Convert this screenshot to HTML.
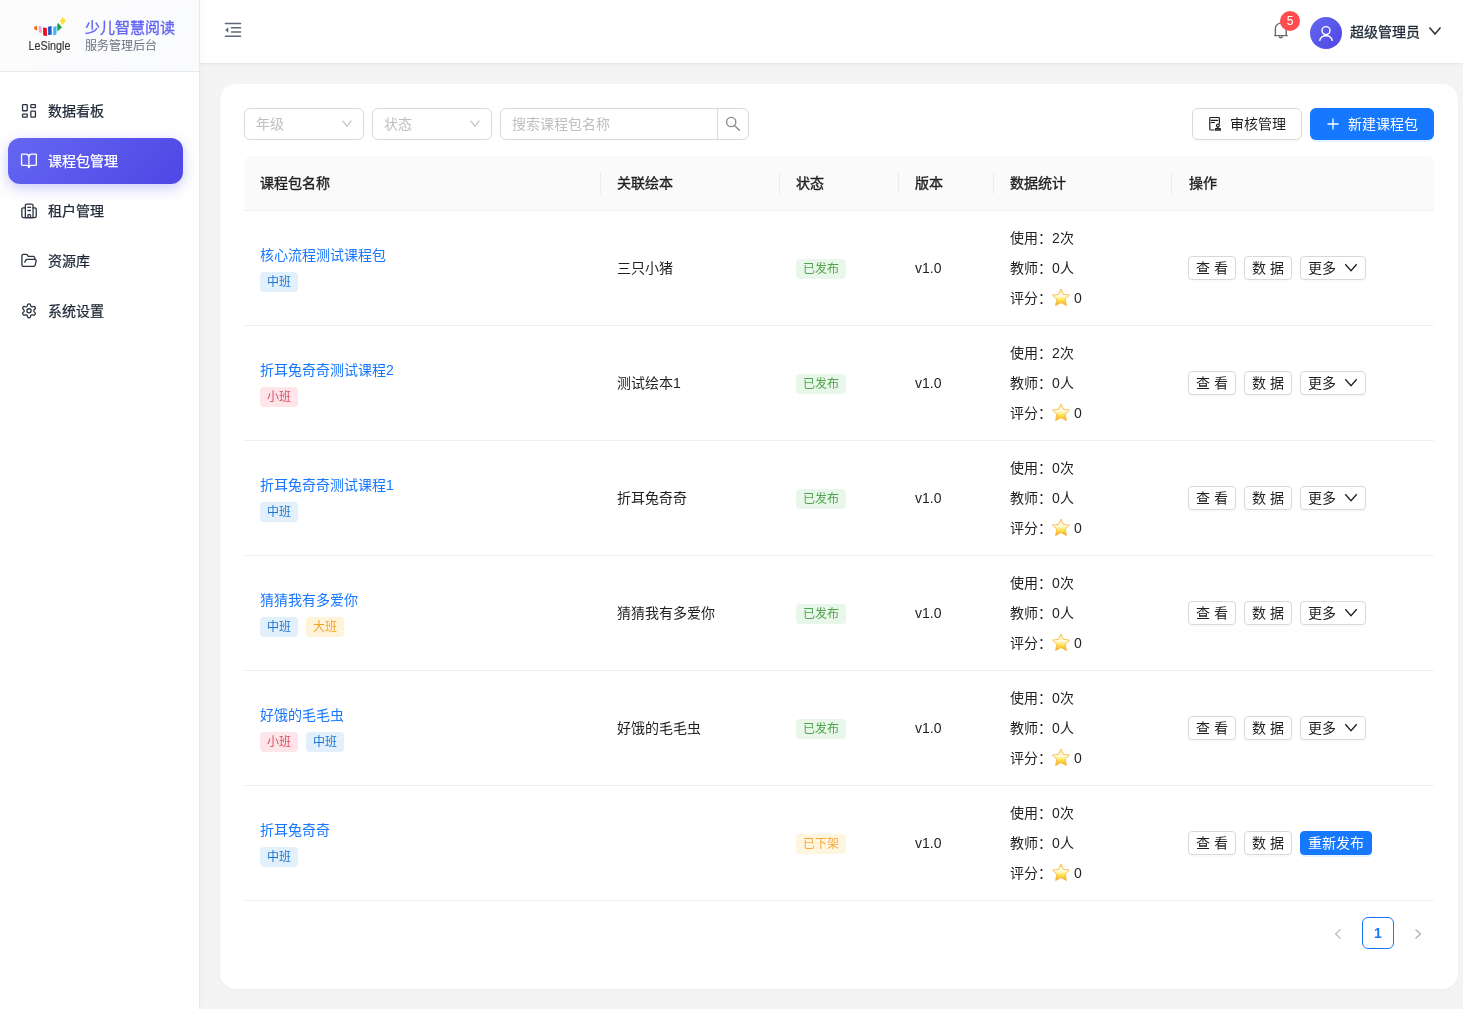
<!DOCTYPE html>
<html lang="zh-CN">
<head>
<meta charset="utf-8">
<style>
*{box-sizing:border-box;margin:0;padding:0}
html,body{width:1463px;height:1009px;overflow:hidden}
body{font-family:"Liberation Sans",sans-serif;background:#f4f4f4;color:#1f1f1f;font-size:14px;position:relative}
.abs{position:absolute}
/* sidebar */
#side{position:absolute;left:0;top:0;width:200px;height:1009px;background:#fff;border-right:1px solid #e8e9ee;box-shadow:2px 0 10px rgba(0,0,0,.025);z-index:2}
#logo{position:absolute;left:0;top:0;width:199px;height:72px;border-bottom:1px solid #e5e7eb;background:linear-gradient(135deg,#fcfcfd,#fafbfd)}
.ttl{position:absolute;left:85px;top:16px;font-size:15px;font-weight:400;-webkit-text-stroke:.35px currentColor;color:#6366f1;white-space:nowrap;letter-spacing:0}
.sub{position:absolute;left:85px;top:36px;font-size:12px;color:#6b7280;white-space:nowrap}
.mi{position:absolute;left:8px;width:175px;height:46px;border-radius:12px;color:#1f2937;font-size:14px;font-weight:400;-webkit-text-stroke:.25px currentColor}
.mi svg{position:absolute}
.mi span{position:absolute;left:40px;top:12px;line-height:22px}
.mi.act{background:linear-gradient(135deg,#6467f2,#4f46e5);color:#fff;box-shadow:0 4px 14px rgba(99,102,241,.35)}
/* header */
#hdr{position:absolute;left:200px;top:0;width:1263px;height:64px;background:#fff;border-bottom:1px solid #e8e9ee;box-shadow:0 1px 4px rgba(0,0,0,.04)}
/* card */
#card{position:absolute;left:220px;top:84px;width:1238px;height:905px;background:#fff;border-radius:16px;box-shadow:0 1px 3px rgba(0,0,0,.035)}
.sel{position:absolute;top:108px;height:32px;border:1px solid #d9d9d9;border-radius:6px;background:#fff;color:#bfbfbf;font-size:14px}
.sel span{position:absolute;left:11px;top:4px;line-height:22px}
.sel svg{position:absolute;right:11px;top:10px;overflow:visible}
.btn{position:absolute;height:32px;border-radius:6px;font-size:14px;line-height:30px;white-space:nowrap}
/* table */
#thead{position:absolute;left:244px;top:156px;width:1190px;height:55px;background:#fafafa;border-bottom:1px solid #f0f0f0;border-radius:8px 8px 0 0}
.th{position:absolute;top:16px;line-height:22px;font-weight:400;-webkit-text-stroke:.35px currentColor;color:#1f1f1f}
.dv{position:absolute;top:16px;width:1px;height:22px;background:#ececec}
.row{position:absolute;left:244px;width:1190px;height:115px;border-bottom:1px solid #f0f0f0}
.name{position:absolute;left:16px;line-height:22px;color:#1677ff}
.tag{position:absolute;height:20px;line-height:21px;padding:0 7px;border-radius:4px;font-size:12px}
.t-mid{background:#e2f0fc;color:#1f74d2}
.t-small{background:#fde5e9;color:#dc4c60}
.t-big{background:#fff4da;color:#f2a22a}
.book{position:absolute;left:373px;line-height:22px;color:#1f1f1f}
.st{position:absolute;left:552px;height:20px;line-height:20px;padding:0 7px;border-radius:4px;font-size:12px}
.pub{background:#e9f7ea;color:#52a350}
.off{background:#fff6e0;color:#f5a93a}
.ver{position:absolute;left:671px;line-height:22px}
.stat{position:absolute;left:766px;line-height:22px;white-space:nowrap}
.ab{position:absolute;height:24px;border:1px solid #d9d9d9;border-radius:4px;background:#fff;font-size:14px;line-height:22px;color:#1f1f1f;white-space:nowrap;box-shadow:0 2px 0 rgba(0,0,0,.02)}
.star{display:inline-block;vertical-align:-3px;margin:0 4px 0 0}
.ab.pri{background:#1677ff;border-color:#1677ff;color:#fff;box-shadow:0 2px 0 rgba(5,145,255,.1)}
.wc{will-change:transform}</style>
</head>
<body><div class="wc" style="position:absolute;left:0;top:0;width:1463px;height:1009px">
<svg width="0" height="0" style="position:absolute"><defs><linearGradient id="sg" x1="0" y1="0" x2="0" y2="1"><stop offset="0" stop-color="#ffe9a0"/><stop offset=".4" stop-color="#fffde6"/><stop offset=".68" stop-color="#fde24a"/><stop offset="1" stop-color="#f3a11a"/></linearGradient></defs></svg>
<div id="side">
  <div id="logo">
    <svg class="abs" style="left:26px;top:14px" width="48" height="42" viewBox="26 14 48 42">
      <path d="M34.5 26.5 L37 25.8 L37.2 30.8 L34 29 Z" fill="#f26d21"/>
      <path d="M38.8 25.8 L41.6 26.4 L41.8 33.2 L38.9 32.2 Z" fill="#f9a0cf"/>
      <path d="M43 27.6 L46.8 27.9 L47 36 L43.2 35.6 Z" fill="#e8101f"/>
      <path d="M48 26.8 L51.6 26.1 L51.7 34.8 L48.1 35.1 Z" fill="#1e5fc8"/>
      <path d="M53.2 26.9 L56.6 26.1 L56.4 34.6 L53.3 35.5 Z" fill="#3cb9f0"/>
      <path d="M57.2 24.6 L58.4 23.1 L61.9 27.4 L57.4 31.6 Z" fill="#17a34a"/>
      <path d="M59.9 21 L62.9 16.9 L66.1 21 L62.3 24.9 Z" fill="#fde03a"/>
      <text x="28.5" y="49.6" font-family="Liberation Sans" font-size="13.5" fill="#3a3a3a" stroke="#3a3a3a" stroke-width=".2" textLength="42" lengthAdjust="spacingAndGlyphs">LeSingle</text>
    </svg>
    <div class="ttl">少儿智慧阅读</div>
    <div class="sub">服务管理后台</div>
  </div>
  <!-- menu -->
  <div class="mi" style="top:88px">
    <svg style="left:13px;top:15px" width="16" height="16" viewBox="0 0 16 16" fill="none" stroke="#2b3340" stroke-width="1.3"><rect x="1.55" y="1.55" width="4.7" height="6.2" rx=".6"/><rect x="9.85" y="1.55" width="4.6" height="3.1" rx=".6"/><rect x="9.85" y="8.05" width="4.6" height="6.1" rx=".6"/><rect x="1.55" y="11.15" width="4.7" height="3" rx=".6"/></svg>
    <span>数据看板</span>
  </div>
  <div class="mi act" style="top:138px">
    <svg style="left:12px;top:15px" width="18" height="17" viewBox="0 0 18 17" fill="none" stroke="#fff" stroke-width="1.3" stroke-linecap="round" stroke-linejoin="round"><path d="M8.9 3.6V14.5"/><path d="M2.3 12.35a.75 .75 0 0 1-.75-.75V1.9a.75 .75 0 0 1 .75-.75H5.9a3 3 0 0 1 3 2.6a3 3 0 0 1 3-2.6H15.6a.75 .75 0 0 1 .75.75V11.6a.75 .75 0 0 1-.75.75H11.2a2.3 2.3 0 0 0-2.3 2.1a2.3 2.3 0 0 0-2.3-2.1Z"/></svg>
    <span>课程包管理</span>
  </div>
  <div class="mi" style="top:188px">
    <svg style="left:12px;top:15px" width="18" height="16" viewBox="0 0 18 16" fill="none" stroke="#2b3340" stroke-width="1.3" stroke-linecap="round" stroke-linejoin="round"><path d="M5.35 14.55V2.6a1.55 1.55 0 0 1 1.55-1.55H11.5a1.55 1.55 0 0 1 1.55 1.55V14.55Z"/><path d="M5.35 4.85H3.4a1.55 1.55 0 0 0-1.55 1.55V13a1.55 1.55 0 0 0 1.55 1.55H14.7a1.55 1.55 0 0 0 1.55-1.55V6.4a1.55 1.55 0 0 0-1.55-1.55H13.05"/><path d="M7.9 4.4H10.5M7.9 7.5H10.5"/><path d="M7.9 14.55V12.6a1.3 1.3 0 0 1 2.6 0V14.55"/></svg>
    <span>租户管理</span>
  </div>
  <div class="mi" style="top:238px">
    <svg style="left:12px;top:15px" width="18" height="16" viewBox="0 0 18 16" fill="none" stroke="#2b3340" stroke-width="1.3" stroke-linecap="round" stroke-linejoin="round"><g transform="translate(0.487 -0.83) scale(0.713)" stroke-width="1.85"><path d="m6 14 1.5-2.9A2 2 0 0 1 9.24 10H20a2 2 0 0 1 1.94 2.5l-1.54 6a2 2 0 0 1-1.950 1.5H4a2 2 0 0 1-2-2V5a2 2 0 0 1 2-2h3.9a2 2 0 0 1 1.69.9l.81 1.2a2 2 0 0 0 1.67.9H18a2 2 0 0 1 2 2v2"/></g></svg>
    <span>资源库</span>
  </div>
  <div class="mi" style="top:288px">
    <svg style="left:12px;top:15px" width="18" height="17" viewBox="0 0 18 17" fill="none" stroke="#2b3340" stroke-width="1.3" stroke-linecap="round" stroke-linejoin="round"><g transform="translate(0.575 -0.6) scale(0.703)" stroke-width="1.85"><path d="M12.22 2h-.44a2 2 0 0 0-2 2v.18a2 2 0 0 1-1 1.73l-.43.25a2 2 0 0 1-2 0l-.15-.08a2 2 0 0 0-2.73.73l-.22.38a2 2 0 0 0 .73 2.73l.15.1a2 2 0 0 1 1 1.72v.51a2 2 0 0 1-1 1.74l-.15.09a2 2 0 0 0-.73 2.73l.22.38a2 2 0 0 0 2.73.73l.15-.08a2 2 0 0 1 2 0l.43.25a2 2 0 0 1 1 1.73V20a2 2 0 0 0 2 2h.44a2 2 0 0 0 2-2v-.18a2 2 0 0 1 1-1.730l.43-.25a2 2 0 0 1 2 0l.15.08a2 2 0 0 0 2.73-.73l.22-.39a2 2 0 0 0-.73-2.73l-.15-.08a2 2 0 0 1-1-1.74v-.5a2 2 0 0 1 1-1.74l.15-.09a2 2 0 0 0 .73-2.73l-.22-.38a2 2 0 0 0-2.73-.73l-.15.08a2 2 0 0 1-2 0l-.43-.25a2 2 0 0 1-1-1.73V4a2 2 0 0 0-2-2z"/><circle cx="12" cy="12" r="3"/></g></svg>
    <span>系统设置</span>
  </div>
</div>

<div id="hdr">
  <svg class="abs" style="left:24px;top:22px" width="18" height="16" viewBox="0 0 18 16" fill="none" stroke="#5f6677" stroke-width="1.6" stroke-linecap="round"><path d="M1.5 1.5h15 M7.5 5.7h9 M7.5 10h9 M1.5 14.3h15"/><path d="M4.3 5.2v5.6L1.2 8z" fill="#5f6677" stroke="none"/></svg>
  <svg class="abs" style="left:1072px;top:20px" width="18" height="20" viewBox="0 0 18 20" fill="none" stroke="#6b6b6b" stroke-width="1.4"><path d="M3.4 15.5V8.5a5.4 5.4 0 0 1 10.8 0v7 M2.2 15.6h13.6"/><path d="M7.3 16.2a1.5 1.5 0 0 0 3 0" /></svg>
  <div class="abs" style="left:1080px;top:11px;width:20px;height:20px;border-radius:10px;background:#ff4d4f;color:#fff;font-size:12px;line-height:20px;text-align:center">5</div>
  <div class="abs" style="left:1110px;top:17px;width:32px;height:32px;border-radius:16px;background:linear-gradient(135deg,#6468f0,#4f46e5)">
    <svg class="abs" style="left:0;top:0" width="32" height="32" viewBox="0 0 32 32" fill="none" stroke="#fff" stroke-width="1.4"><circle cx="16" cy="13.6" r="4"/><path d="M9.6 23.8a6.6 6.6 0 0 1 12.8 0"/></svg>
  </div>
  <div class="abs" style="left:1150px;top:21px;line-height:22px;font-size:14px;font-weight:400;-webkit-text-stroke:.3px currentColor;color:#1f2937;white-space:nowrap">超级管理员</div>
  <svg class="abs" style="left:1228px;top:26px" width="14" height="10" viewBox="0 0 14 10" fill="none" stroke="#333" stroke-width="1.5"><path d="M1.5 1.5l5.5 6.5 5.5-6.5"/></svg>
</div>
<div id="card"></div>
<div class="sel" style="left:244px;width:120px"><span>年级</span><svg width="12" height="12" viewBox="0 0 12 12" fill="none" stroke="#bfbfbf" stroke-width="1.1"><path d="M2.6 1.6L7 7.3L11.4 1.6"/></svg></div>
<div class="sel" style="left:372px;width:120px"><span>状态</span><svg width="12" height="12" viewBox="0 0 12 12" fill="none" stroke="#bfbfbf" stroke-width="1.1"><path d="M2.6 1.6L7 7.3L11.4 1.6"/></svg></div>
<div class="sel" style="left:500px;width:249px"><span>搜索课程包名称</span></div>
<div class="abs" style="left:717px;top:108px;width:1px;height:32px;background:#d9d9d9"></div>
<svg class="abs" style="left:725px;top:116px" width="16" height="16" viewBox="0 0 16 16" fill="none" stroke="#8c8c8c" stroke-width="1.4"><circle cx="6.2" cy="6" r="4.6"/><path d="M9.5 9.4l4.8 4.8" stroke-linecap="round"/></svg>
<div class="btn" style="left:1192px;top:108px;width:110px;border:1px solid #d9d9d9;background:#fff;color:#1f1f1f;box-shadow:0 2px 0 rgba(0,0,0,.02)">
  <svg class="abs" style="left:15px;top:7px" width="14" height="16" viewBox="0 0 14 16" fill="none" stroke="#1f1f1f" stroke-width="1.2" stroke-linecap="round"><path d="M11.4 7.3V2.3a.8 .8 0 0 0-.8-.8H2.6a.8 .8 0 0 0-.8.8V13.2a.8 .8 0 0 0 .8.8H5.9"/><path d="M3.3 4.4H9.6M3.3 6.5H6.5"/><circle cx="9.9" cy="9.6" r="1.45"/><path d="M9.9 11.1V12.6"/><rect x="7.5" y="12.6" width="4.9" height="1.6" rx=".3"/></svg>
  <span class="abs" style="left:37px;top:0">审核管理</span>
</div>
<div class="btn" style="left:1310px;top:108px;width:124px;background:#1677ff;color:#fff;box-shadow:0 2px 0 rgba(5,145,255,.1)">
  <svg class="abs" style="left:16px;top:9px" width="14" height="14" viewBox="0 0 14 14" fill="none" stroke="#fff" stroke-width="1.3"><path d="M7 1.5v11 M1.5 7h11"/></svg>
  <span class="abs" style="left:38px;top:1px">新建课程包</span>
</div>
<div id="thead">
  <div class="th" style="left:16px">课程包名称</div>
  <div class="dv" style="left:356px"></div>
  <div class="th" style="left:373px">关联绘本</div>
  <div class="dv" style="left:535px"></div>
  <div class="th" style="left:552px">状态</div>
  <div class="dv" style="left:654px"></div>
  <div class="th" style="left:671px">版本</div>
  <div class="dv" style="left:749px"></div>
  <div class="th" style="left:766px">数据统计</div>
  <div class="dv" style="left:927px"></div>
  <div class="th" style="left:945px">操作</div>
</div>
<div class="row" style="top:211px">
  <div class="name" style="top:33px">核心流程测试课程包</div>
  <div class="tag t-mid" style="left:16px;top:61px">中班</div>
  <div class="book" style="top:46px">三只小猪</div>
  <div class="st pub" style="top:48px">已发布</div>
  <div class="ver" style="top:46px">v1.0</div>
  <div class="stat" style="top:16px">使用：2次</div>
  <div class="stat" style="top:46px">教师：0人</div>
  <div class="stat" style="top:76px">评分：<svg class="star" width="18" height="18" viewBox="0 0 18 18"><path d="M9 1.1L11.5 6.4L17.5 7.1L13.2 11.2L14.4 17.6L9 14.6L3.6 17.6L4.8 11.2L0.5 7.1L6.5 6.4Z" fill="url(#sg)" stroke="#f7b84a" stroke-width=".9" stroke-linejoin="round"/></svg><span class="zero">0</span></div>
  <div class="ab" style="left:944px;top:45px;width:48px;padding-left:7px">查 看</div>
  <div class="ab" style="left:1000px;top:45px;width:48px;padding-left:7px">数 据</div>
  <div class="ab" style="left:1056px;top:45px;width:66px;padding-left:7px">更多<svg class="abs" style="left:43px;top:5px" width="14" height="12" viewBox="0 0 14 12" fill="none" stroke="#1f1f1f" stroke-width="1.3"><path d="M1.3 2.3l5.7 6.4 5.7-6.4"/></svg></div>
</div>
<div class="row" style="top:326px">
  <div class="name" style="top:33px">折耳兔奇奇测试课程2</div>
  <div class="tag t-small" style="left:16px;top:61px">小班</div>
  <div class="book" style="top:46px">测试绘本1</div>
  <div class="st pub" style="top:48px">已发布</div>
  <div class="ver" style="top:46px">v1.0</div>
  <div class="stat" style="top:16px">使用：2次</div>
  <div class="stat" style="top:46px">教师：0人</div>
  <div class="stat" style="top:76px">评分：<svg class="star" width="18" height="18" viewBox="0 0 18 18"><path d="M9 1.1L11.5 6.4L17.5 7.1L13.2 11.2L14.4 17.6L9 14.6L3.6 17.6L4.8 11.2L0.5 7.1L6.5 6.4Z" fill="url(#sg)" stroke="#f7b84a" stroke-width=".9" stroke-linejoin="round"/></svg><span class="zero">0</span></div>
  <div class="ab" style="left:944px;top:45px;width:48px;padding-left:7px">查 看</div>
  <div class="ab" style="left:1000px;top:45px;width:48px;padding-left:7px">数 据</div>
  <div class="ab" style="left:1056px;top:45px;width:66px;padding-left:7px">更多<svg class="abs" style="left:43px;top:5px" width="14" height="12" viewBox="0 0 14 12" fill="none" stroke="#1f1f1f" stroke-width="1.3"><path d="M1.3 2.3l5.7 6.4 5.7-6.4"/></svg></div>
</div>
<div class="row" style="top:441px">
  <div class="name" style="top:33px">折耳兔奇奇测试课程1</div>
  <div class="tag t-mid" style="left:16px;top:61px">中班</div>
  <div class="book" style="top:46px">折耳兔奇奇</div>
  <div class="st pub" style="top:48px">已发布</div>
  <div class="ver" style="top:46px">v1.0</div>
  <div class="stat" style="top:16px">使用：0次</div>
  <div class="stat" style="top:46px">教师：0人</div>
  <div class="stat" style="top:76px">评分：<svg class="star" width="18" height="18" viewBox="0 0 18 18"><path d="M9 1.1L11.5 6.4L17.5 7.1L13.2 11.2L14.4 17.6L9 14.6L3.6 17.6L4.8 11.2L0.5 7.1L6.5 6.4Z" fill="url(#sg)" stroke="#f7b84a" stroke-width=".9" stroke-linejoin="round"/></svg><span class="zero">0</span></div>
  <div class="ab" style="left:944px;top:45px;width:48px;padding-left:7px">查 看</div>
  <div class="ab" style="left:1000px;top:45px;width:48px;padding-left:7px">数 据</div>
  <div class="ab" style="left:1056px;top:45px;width:66px;padding-left:7px">更多<svg class="abs" style="left:43px;top:5px" width="14" height="12" viewBox="0 0 14 12" fill="none" stroke="#1f1f1f" stroke-width="1.3"><path d="M1.3 2.3l5.7 6.4 5.7-6.4"/></svg></div>
</div>
<div class="row" style="top:556px">
  <div class="name" style="top:33px">猜猜我有多爱你</div>
  <div class="tag t-mid" style="left:16px;top:61px">中班</div>
  <div class="tag t-big" style="left:62px;top:61px">大班</div>
  <div class="book" style="top:46px">猜猜我有多爱你</div>
  <div class="st pub" style="top:48px">已发布</div>
  <div class="ver" style="top:46px">v1.0</div>
  <div class="stat" style="top:16px">使用：0次</div>
  <div class="stat" style="top:46px">教师：0人</div>
  <div class="stat" style="top:76px">评分：<svg class="star" width="18" height="18" viewBox="0 0 18 18"><path d="M9 1.1L11.5 6.4L17.5 7.1L13.2 11.2L14.4 17.6L9 14.6L3.6 17.6L4.8 11.2L0.5 7.1L6.5 6.4Z" fill="url(#sg)" stroke="#f7b84a" stroke-width=".9" stroke-linejoin="round"/></svg><span class="zero">0</span></div>
  <div class="ab" style="left:944px;top:45px;width:48px;padding-left:7px">查 看</div>
  <div class="ab" style="left:1000px;top:45px;width:48px;padding-left:7px">数 据</div>
  <div class="ab" style="left:1056px;top:45px;width:66px;padding-left:7px">更多<svg class="abs" style="left:43px;top:5px" width="14" height="12" viewBox="0 0 14 12" fill="none" stroke="#1f1f1f" stroke-width="1.3"><path d="M1.3 2.3l5.7 6.4 5.7-6.4"/></svg></div>
</div>
<div class="row" style="top:671px">
  <div class="name" style="top:33px">好饿的毛毛虫</div>
  <div class="tag t-small" style="left:16px;top:61px">小班</div>
  <div class="tag t-mid" style="left:62px;top:61px">中班</div>
  <div class="book" style="top:46px">好饿的毛毛虫</div>
  <div class="st pub" style="top:48px">已发布</div>
  <div class="ver" style="top:46px">v1.0</div>
  <div class="stat" style="top:16px">使用：0次</div>
  <div class="stat" style="top:46px">教师：0人</div>
  <div class="stat" style="top:76px">评分：<svg class="star" width="18" height="18" viewBox="0 0 18 18"><path d="M9 1.1L11.5 6.4L17.5 7.1L13.2 11.2L14.4 17.6L9 14.6L3.6 17.6L4.8 11.2L0.5 7.1L6.5 6.4Z" fill="url(#sg)" stroke="#f7b84a" stroke-width=".9" stroke-linejoin="round"/></svg><span class="zero">0</span></div>
  <div class="ab" style="left:944px;top:45px;width:48px;padding-left:7px">查 看</div>
  <div class="ab" style="left:1000px;top:45px;width:48px;padding-left:7px">数 据</div>
  <div class="ab" style="left:1056px;top:45px;width:66px;padding-left:7px">更多<svg class="abs" style="left:43px;top:5px" width="14" height="12" viewBox="0 0 14 12" fill="none" stroke="#1f1f1f" stroke-width="1.3"><path d="M1.3 2.3l5.7 6.4 5.7-6.4"/></svg></div>
</div>
<div class="row" style="top:786px">
  <div class="name" style="top:33px">折耳兔奇奇</div>
  <div class="tag t-mid" style="left:16px;top:61px">中班</div>
  <div class="st off" style="top:48px">已下架</div>
  <div class="ver" style="top:46px">v1.0</div>
  <div class="stat" style="top:16px">使用：0次</div>
  <div class="stat" style="top:46px">教师：0人</div>
  <div class="stat" style="top:76px">评分：<svg class="star" width="18" height="18" viewBox="0 0 18 18"><path d="M9 1.1L11.5 6.4L17.5 7.1L13.2 11.2L14.4 17.6L9 14.6L3.6 17.6L4.8 11.2L0.5 7.1L6.5 6.4Z" fill="url(#sg)" stroke="#f7b84a" stroke-width=".9" stroke-linejoin="round"/></svg><span class="zero">0</span></div>
  <div class="ab" style="left:944px;top:45px;width:48px;padding-left:7px">查 看</div>
  <div class="ab" style="left:1000px;top:45px;width:48px;padding-left:7px">数 据</div>
  <div class="ab pri" style="left:1056px;top:45px;width:72px;padding-left:7px">重新发布</div>
</div>
<svg class="abs" style="left:1331px;top:927px" width="14" height="14" viewBox="0 0 14 14" fill="none" stroke="#b8b8b8" stroke-width="1.05"><path d="M9.5 2.5L4.5 7l5 4.5"/></svg>
<div class="abs" style="left:1362px;top:917px;width:32px;height:32px;border:1px solid #1677ff;border-radius:6px;color:#1677ff;font-weight:600;line-height:30px;text-align:center;font-size:14px">1</div>
<svg class="abs" style="left:1411px;top:927px" width="14" height="14" viewBox="0 0 14 14" fill="none" stroke="#a8a8a8" stroke-width="1.05"><path d="M4.5 2.5L9.5 7l-5 4.5"/></svg>

</div></body>
</html>
